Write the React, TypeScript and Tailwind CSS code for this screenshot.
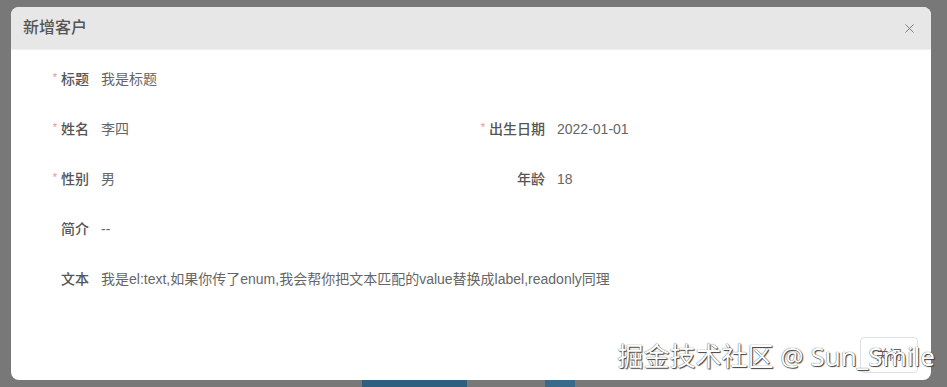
import { X } from "lucide-react";

const font = { fontFamily: '"Liberation Sans", "Noto Sans CJK SC", sans-serif' };

function Field({
  label,
  value,
  required,
}: {
  label: string;
  value: string;
  required?: boolean;
}) {
  return (
    <div className="flex h-[50px] items-center">
      <div className="flex w-[78px] shrink-0 items-center justify-end text-[14px] font-medium text-[#555]">
        {required && <span className="mr-[4px] -mt-[4px] text-[11px] text-[#f08b9a]">*</span>}
        {label}
      </div>
      <div className="pl-[12px] text-[14px] text-[#666]">{value}</div>
    </div>
  );
}

export default function App() {
  return (
    <div className="relative h-[387px] w-[947px] overflow-hidden bg-[#787878]" style={font}>
      <div className="pl-[11px] pt-[7px]">
        <div className="flex h-[373px] w-[920px] flex-col overflow-hidden rounded-[8px] bg-white">
          <div className="flex h-[43px] shrink-0 items-center justify-between border-b border-[#f0f0f0] bg-[#e7e7e7] pl-[12px] pr-[14px]">
            <span className="text-[16px] font-medium text-[#555]">新增客户</span>
            <X className="h-[15px] w-[15px] text-[#777]" strokeWidth={1.5} />
          </div>
          <div className="flex-1 pt-[4px]">
            <Field label="标题" value="我是标题" required />
            <div className="grid grid-cols-[456px_1fr]">
              <Field label="姓名" value="李四" required />
              <Field label="出生日期" value="2022-01-01" required />
              <Field label="性别" value="男" required />
              <Field label="年龄" value="18" />
            </div>
            <Field label="简介" value="--" />
            <Field label="文本" value="我是el:text,如果你传了enum,我会帮你把文本匹配的value替换成label,readonly同理" />
          </div>
          <div className="flex justify-end pb-[7px] pr-[13px]">
            <button className="h-[36px] w-[58px] rounded-[4px] border border-[#dcdfe6] bg-white text-[13px] text-[#606266]">
              关闭
            </button>
          </div>
        </div>
      </div>
      <div className="flex h-[7px]">
        <div className="ml-[362px] h-full w-[105px] bg-[#2f5e7e]" />
        <div className="ml-[78px] h-full w-[30px] bg-[#3a6a8a]" />
      </div>
      <div
        className="absolute right-[12px] top-[340px] text-[26px] leading-[32px] text-white [text-shadow:0_0_1px_#222,1px_1px_1px_#444]"
        style={{ fontFamily: '"Noto Sans", "Noto Sans CJK SC", sans-serif' }}
      >
        掘金技术社区 @ Sun_Smile
      </div>
    </div>
  );
}
